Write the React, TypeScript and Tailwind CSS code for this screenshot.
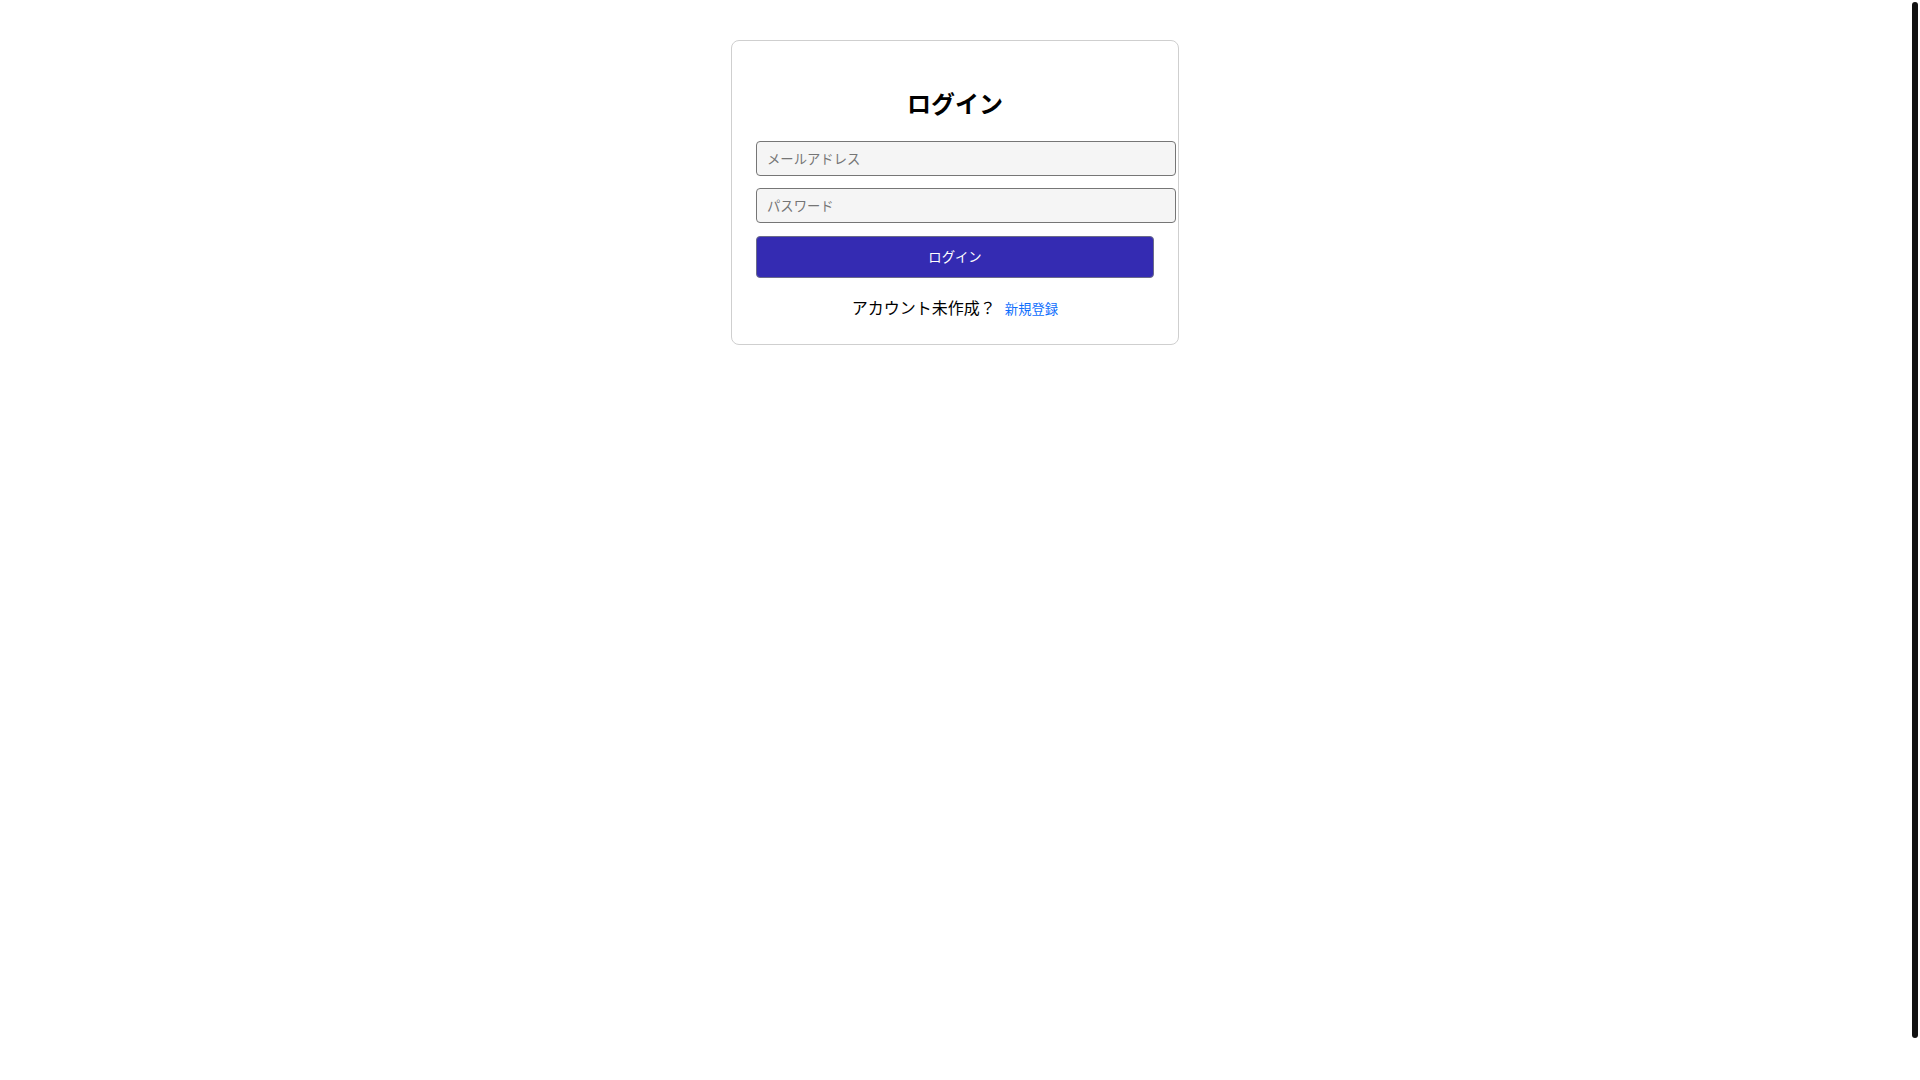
const font = { fontFamily: '"Noto Sans CJK JP", "Noto Sans", sans-serif' };

export default function App() {
  return (
    <div className="flex h-screen overflow-hidden bg-white" style={font}>
      <main className="flex-1 pt-10">
        <div className="mx-auto w-[448px] rounded-lg border border-[#cfcfcf] bg-white px-6 pt-6 pb-[23px]">
          <h2 className="mt-[22px] mb-[22px] text-center text-2xl leading-8 font-bold text-black">ログイン</h2>
          <form className="flex flex-col gap-3" onSubmit={(e) => e.preventDefault()}>
            <input
              type="email"
              placeholder="メールアドレス"
              className="h-[35px] w-[420px] rounded border border-[#767676] bg-[#f5f5f5] px-[10px] text-[13.33px] text-black placeholder:text-[#757575]"
            />
            <input
              type="password"
              placeholder="パスワード"
              className="h-[35px] w-[420px] rounded border border-[#767676] bg-[#f5f5f5] px-[10px] text-[13.33px] text-black placeholder:text-[#757575]"
            />
            <button
              type="submit"
              className="mt-px h-[42px] w-full rounded border border-[#6b6b8a] bg-[#342bb2] text-[13.33px] text-white"
            >
              ログイン
            </button>
          </form>
          <p className="mt-[17px] text-center text-base leading-6 text-black">
            アカウント未作成？
            <a href="#" className="ml-[9px] text-[13.33px] text-[#0d6efd]">
              新規登録
            </a>
          </p>
        </div>
      </main>
      {/* scrollbar track */}
      <div className="flex w-[10px] justify-center pt-[2px]">
        <div className="h-[1036px] w-[6px] rounded-full bg-[#111111]" />
      </div>
    </div>
  );
}
